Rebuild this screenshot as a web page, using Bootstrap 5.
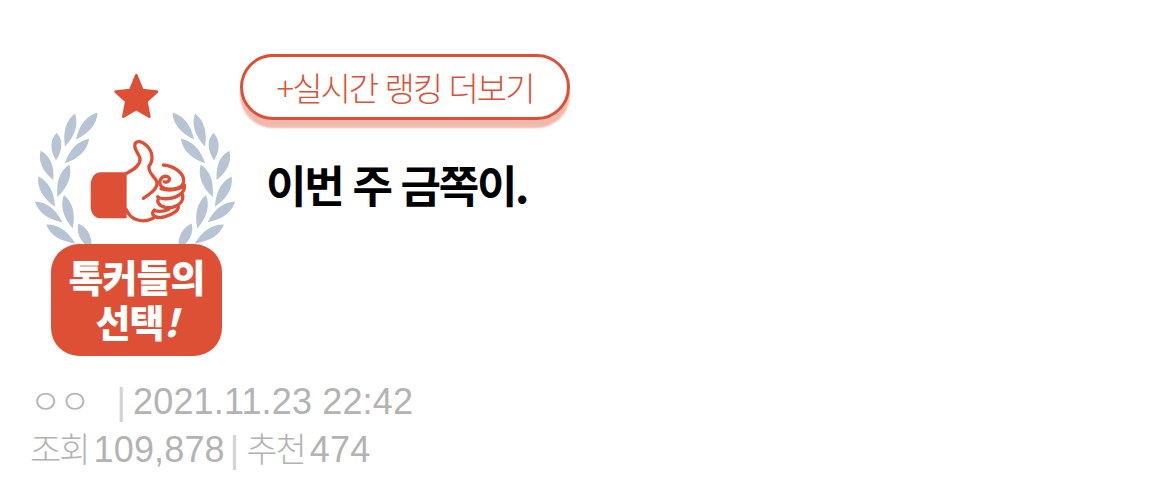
<!DOCTYPE html>
<html lang="ko">
<head>
    <meta charset="UTF-8">
    <meta name="viewport" content="width=device-width, initial-scale=1">
    <title>이번 주 금쪽이.</title>
    <link href="https://cdn.jsdelivr.net/npm/bootstrap@5.3.0/dist/css/bootstrap.min.css" rel="stylesheet">
    <style>
        body {
            background: #fff;
            font-family: "Liberation Sans", "Noto Sans CJK KR", sans-serif;
        }
        .post-head {
            padding-top: 54px;
            padding-left: 20px;
        }
        .award {
            width: 220px;
            height: 302px;
            position: relative;
            flex: none;
        }
        .award svg {
            position: absolute;
            left: 0;
            top: 6px;
        }
        .award-tag {
            position: absolute;
            left: 31px;
            top: 190px;
            width: 171px;
            height: 112px;
            border-radius: 28px;
            background: #dd5035;
            color: #fff;
            font-family: "Noto Sans CJK KR", sans-serif;
            font-weight: 900;
            font-size: 38px;
            line-height: 45px;
            letter-spacing: -1px;
            padding-top: 9px;
        }
        .more-btn {
            width: 330px;
            height: 66px;
            border: 3px solid #dd5035;
            border-radius: 33px;
            box-shadow: 0 8px 2px rgba(221, 80, 53, .4);
            color: #dd5035;
            background: #fff;
            font-family: "Noto Sans CJK KR", sans-serif;
            font-weight: 300;
            font-size: 33px;
            letter-spacing: -2px;
            line-height: 1;
            padding: 0;
        }
        .post-title {
            font-family: "Noto Sans CJK KR", sans-serif;
            font-weight: 700;
            font-size: 44px;
            letter-spacing: -2.3px;
            line-height: 60px;
            color: #000;
            margin: 34px 0 0 26px;
        }
        .post-meta {
            padding-left: 30px;
            color: #b3b3b3;
            font-size: 36px;
            line-height: 48px;
            letter-spacing: .15px;
            margin-top: 22px;
        }
        .post-meta .ko {
            font-family: "Noto Sans CJK KR", sans-serif;
            font-weight: 300;
            font-size: 34px;
            letter-spacing: -2px;
            line-height: 1;
        }
        .post-meta .sep {
            color: #d2d2d2;
            line-height: 1;
            margin: 0 7px 0 5px;
        }
        .meta-gap {
            margin-left: 5px;
        }
        .meta-name {
            margin-right: 23px;
        }
    </style>
</head>
<body>

<div class="d-flex post-head">
    <div class="award">
        <svg width="230" height="190" viewBox="0 0 690 570">
            <defs>
                <path id="leaf" d="M-52 0Q-10 -30 52 0Q-10 30 -52 0Z" fill="#b7c4d3"/>
                <g id="laurel">
                    <use href="#leaf" transform="translate(150 210) rotate(106.7)"/>
                    <use href="#leaf" transform="translate(200 198) rotate(128.7)"/>
                    <use href="#leaf" transform="translate(171 273) rotate(134.6)"/>
                    <use href="#leaf" transform="translate(109 260) rotate(91.4) scale(.8 1)"/>
                    <use href="#leaf" transform="translate(130 362) rotate(110)"/>
                    <use href="#leaf" transform="translate(81 316) rotate(66.6) scale(.92 1)"/>
                    <use href="#leaf" transform="translate(80 395) rotate(61)"/>
                    <use href="#leaf" transform="translate(145 455) rotate(75.4)"/>
                    <use href="#leaf" transform="translate(86 456) rotate(37)"/>
                    <use href="#leaf" transform="translate(122 522) rotate(33)"/>
                    <use href="#leaf" transform="translate(195 530) rotate(63) scale(.85 1)"/>
                </g>
            </defs>
            <use href="#laurel"/>
            <use href="#laurel" transform="translate(690 0) scale(-1 1)"/>
            <path d="M349 46L367 90L411 95L379 124L388 170L349 147L310 170L319 124L287 95L331 90Z" fill="#dd5035" stroke="#dd5035" stroke-width="8" stroke-linejoin="round"/>
            <g transform="translate(195 210)">
                <path d="M125 127H48C28 127 17 145 17 165V228C17 250 28 265 48 265H125Z" fill="#dd5035"/>
                <g fill="none" stroke="#dd5035" stroke-width="10" stroke-linecap="round" stroke-linejoin="round">
                    <path d="M125 130C140 122 168 108 165 85C160 68 145 55 150 42C155 30 172 34 185 47C205 67 205 92 192 108C188 125 205 138 213 150C224 168 205 185 175 205"/>
                    <path d="M125 240C135 268 170 282 205 265"/>
                    <path d="M235 105C270 108 298 130 296 155C292 178 245 184 230 170C216 155 232 134 248 140C260 146 250 160 238 155"/>
                    <path d="M228 176C250 184 285 180 298 165C303 190 270 208 235 206C228 206 222 204 218 200"/>
                    <path d="M220 206C212 225 240 237 262 232C285 226 296 212 293 195"/>
                    <path d="M208 240C192 255 215 268 240 260C262 254 280 242 280 230"/>
                    <path d="M208 242C222 246 238 244 252 238"/>
                </g>
            </g>
        </svg>
        <div class="award-tag text-center">톡커들의<br>선택<i>!</i></div>
    </div>
    <div>
        <button type="button" class="btn more-btn d-block">+실시간 랭킹 더보기</button>
        <h1 class="post-title">이번 주 금쪽이.</h1>
    </div>
</div>

<div class="post-meta">
    <div><span class="ko meta-name">ㅇㅇ</span><span class="sep">|</span>2021.11.23 22:42</div>
    <div><span class="ko">조회</span><span class="meta-gap">109,878</span><span class="sep">|</span><span class="ko">추천</span><span class="meta-gap">474</span></div>
</div>

<script src="https://cdn.jsdelivr.net/npm/bootstrap@5.3.0/dist/js/bootstrap.bundle.min.js"></script>
</body>
</html>
